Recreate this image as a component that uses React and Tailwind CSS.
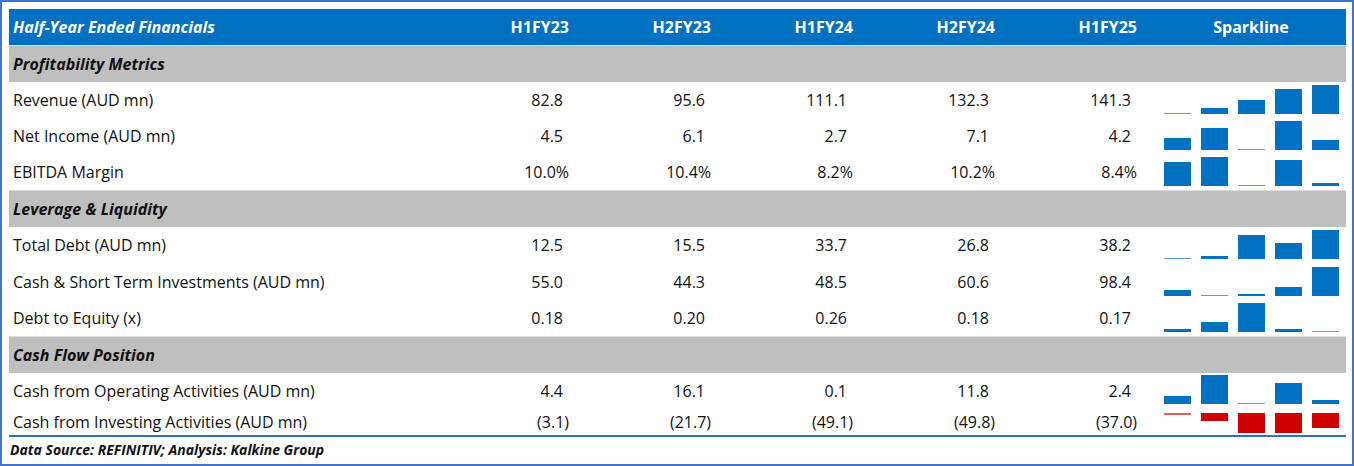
import React from "react";

const FONT = { fontFamily: "'Open Sans', 'Noto Sans', sans-serif" };

const COLS = ["H1FY23", "H2FY23", "H1FY24", "H2FY24", "H1FY25"];

const sections = [
  {
    title: "Profitability Metrics",
    rows: [
      { label: "Revenue (AUD mn)", values: ["82.8", "95.6", "111.1", "132.3", "141.3"], data: [82.8, 95.6, 111.1, 132.3, 141.3] },
      { label: "Net Income (AUD mn)", values: ["4.5", "6.1", "2.7", "7.1", "4.2"], data: [4.5, 6.1, 2.7, 7.1, 4.2] },
      { label: "EBITDA Margin", values: ["10.0%", "10.4%", "8.2%", "10.2%", "8.4%"], data: [10.0, 10.4, 8.2, 10.2, 8.4] },
    ],
  },
  {
    title: "Leverage & Liquidity",
    rows: [
      { label: "Total Debt (AUD mn)", values: ["12.5", "15.5", "33.7", "26.8", "38.2"], data: [12.5, 15.5, 33.7, 26.8, 38.2] },
      { label: "Cash & Short Term Investments (AUD mn)", values: ["55.0", "44.3", "48.5", "60.6", "98.4"], data: [55.0, 44.3, 48.5, 60.6, 98.4], tall: true },
      { label: "Debt to Equity (x)", values: ["0.18", "0.20", "0.26", "0.18", "0.17"], data: [0.18, 0.2, 0.26, 0.18, 0.17] },
    ],
  },
  {
    title: "Cash Flow Position",
    rows: [
      { label: "Cash from Operating Activities (AUD mn)", values: ["4.4", "16.1", "0.1", "11.8", "2.4"], data: [4.4, 16.1, 0.1, 11.8, 2.4], short: true },
      { label: "Cash from Investing Activities (AUD mn)", values: ["(3.1)", "(21.7)", "(49.1)", "(49.8)", "(37.0)"], data: [-3.1, -21.7, -49.1, -49.8, -37.0], last: true },
    ],
  },
];

// Excel-style column sparkline: baseline at min for positives, hanging from max for negatives
const Sparkline = ({ data, negative }) => {
  const min = Math.min(...data);
  const max = Math.max(...data);
  const range = max - min || 1;
  if (negative) {
    return (
      <div className="flex h-full items-start justify-center gap-[10px] pt-[5px]">
        {data.map((v, i) => {
          const h = ((max - v) / range) * 20;
          return (
            <div
              key={i}
              className={`w-[27px] ${h < 1.5 ? "bg-[#e06060]" : "bg-[#d00000]"}`}
              style={{ height: Math.max(1.5, h) }}
            />
          );
        })}
      </div>
    );
  }
  return (
    <div className="flex h-full items-end justify-center gap-[10px] pb-[4px]">
      {data.map((v, i) => {
        const h = ((v - min) / range) * 29;
        return (
          <div
            key={i}
            className={`w-[27px] ${h < 1.5 ? "bg-[#5b9bd5]" : "bg-[#0070c0]"}`}
            style={{ height: Math.max(1.5, h) }}
          />
        );
      })}
    </div>
  );
};

const ValueCell = ({ value }) => {
  const hang = value.endsWith("%") || value.endsWith(")");
  return (
    <div className={`w-[142px] text-right ${hang ? "pr-[19px]" : "pr-[25px]"}`}>{value}</div>
  );
};

export default function App() {
  return (
    <div
      className="w-[1354px] h-[466px] bg-white border-2 border-[#4472c4] pl-[7px] pt-[7px] text-[16px] text-[#111]"
      style={FONT}
    >
      <div className="w-[1337px]">
        {/* Header */}
        <div className="flex h-[36px] items-center bg-[#0070c0] text-white font-bold">
          <div className="w-[437px] pl-[4px] italic">Half-Year Ended Financials</div>
          {COLS.map((c) => (
            <div key={c} className="w-[142px] text-right pr-[19px]">{c}</div>
          ))}
          <div className="flex-1 text-center">Sparkline</div>
        </div>

        {sections.map((s) => (
          <div key={s.title}>
            <div className="flex h-[37px] items-center bg-[#bfbfbf] border-t border-[#dcdcdc] pl-[4px] font-bold italic">
              {s.title}
            </div>
            {s.rows.map((r) => (
              <div
                key={r.label}
                className={`flex items-center ${r.last ? "h-[27px]" : r.short ? "h-[35px]" : r.tall ? "h-[37px]" : "h-[36px]"}`}
              >
                <div className="w-[437px] pl-[4px]">{r.label}</div>
                {r.values.map((v, i) => (
                  <ValueCell key={i} value={v} />
                ))}
                <div className="flex-1 h-full">
                  <Sparkline data={r.data} negative={r.last} />
                </div>
              </div>
            ))}
          </div>
        ))}

        <div className="border-t-2 border-[#2e75b6] h-[27px] flex items-center pl-[1px] text-[14px] font-bold italic">
          Data Source: REFINITIV; Analysis: Kalkine Group
        </div>
      </div>
    </div>
  );
}
